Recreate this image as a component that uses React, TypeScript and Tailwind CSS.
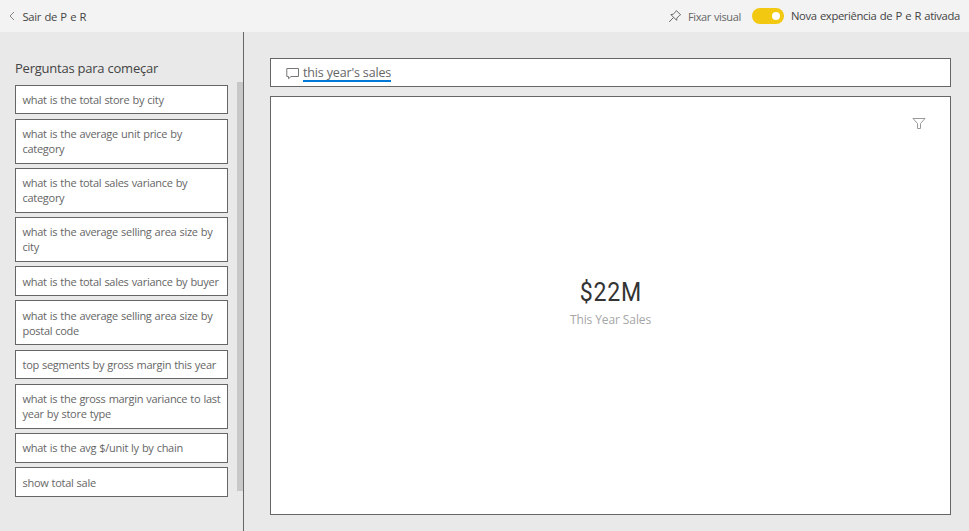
type Question = { lines: string[]; box: string };

const questions: Question[] = [
  { lines: ['what is the total store by city'], box: 'h-[29px] mb-[5px] pt-[6px]' },
  { lines: ['what is the average unit price by', 'category'], box: 'h-[45px] mb-[4px] pt-[6px]' },
  { lines: ['what is the total sales variance by', 'category'], box: 'h-[45px] mb-[4px] pt-[6px]' },
  { lines: ['what is the average selling area size by', 'city'], box: 'h-[45px] mb-[4px] pt-[6px]' },
  { lines: ['what is the total sales variance by buyer'], box: 'h-[30px] mb-[4px] pt-[7px]' },
  { lines: ['what is the average selling area size by', 'postal code'], box: 'h-[45px] mb-[5px] pt-[7px]' },
  { lines: ['top segments by gross margin this year'], box: 'h-[29px] mb-[5px] pt-[6px]' },
  { lines: ['what is the gross margin variance to last', 'year by store type'], box: 'h-[45px] mb-[4px] pt-[6px]' },
  { lines: ['what is the avg $/unit ly by chain'], box: 'h-[30px] mb-[4px] pt-[6px]' },
  { lines: ['show total sale'], box: 'h-[30px] pt-[7px]' },
];

function Header() {
  return (
    <header className="flex h-8 shrink-0 items-center bg-[#f3f3f3] text-[#444]">
      <svg className="ml-[9px] h-[10px] w-[6px]" viewBox="0 0 6 10" fill="none" stroke="#777">
        <path d="M5 1 1 5l4 4" strokeWidth="0.9" />
      </svg>
      <button className="ml-[7.5px] mt-px text-[11.25px] leading-4 tracking-[-0.33px] [word-spacing:0.8px]">Sair de P e R</button>
      <div className="ml-auto flex items-center">
        <svg className="h-[14px] w-[14px]" viewBox="0 0 14 14" fill="none" stroke="#666">
          <path d="M8.4 1.6 12.6 5.8 11.6 6.3 8.9 9 8.6 11.3 2.9 5.6 5.2 5.2 7.9 2.6ZM5.6 8.4 1.2 12.9" strokeWidth="1" />
        </svg>
        <span className="ml-[6px] mt-[2px] w-[54px] whitespace-nowrap text-[11px] leading-4 tracking-[-0.37px] text-[#666] [word-spacing:0.5px]">Fixar visual</span>
        <span className="ml-[10px] flex h-4 w-8 items-center justify-end rounded-full bg-[#f2c811] pr-1">
          <span className="h-2 w-2 rounded-full bg-white" />
        </span>
        <span className="ml-[7px] w-[178px] whitespace-nowrap text-[11.25px] leading-4 tracking-[-0.38px] [word-spacing:0.8px]">Nova experiência de P e R ativada</span>
      </div>
    </header>
  );
}

function Sidebar() {
  return (
    <aside className="flex w-[244px] shrink-0 border-r border-[#666]">
      <div className="ml-[15px] w-[213px] pt-[26px]">
        <h2 className="h-[27px] text-[13px] leading-5 tracking-[-0.23px] text-[#444]">Perguntas para começar</h2>
        {questions.map((q, i) => (
          <div key={i} className={`border border-[#666] bg-white pl-[6.5px] text-[11px] leading-[15px] tracking-[-0.28px] text-[#666] [word-spacing:0.5px] ${q.box}`}>
            {q.lines.map((line) => (
              <div key={line} className="whitespace-nowrap">{line}</div>
            ))}
          </div>
        ))}
      </div>
      <div className="ml-auto mt-[50px] h-[409px] w-[6px] bg-[#c8c8c8]" />
    </aside>
  );
}

export default function App() {
  return (
    <div className="flex h-[531px] w-[969px] flex-col overflow-hidden bg-[#e9e9e9] font-['Open_Sans','Noto_Sans',sans-serif]">
      <Header />
      <div className="flex min-h-0 flex-1">
        <Sidebar />
        <main className="flex flex-1 flex-col pl-[26px] pr-[18px] pt-[26px]">
          <div className="flex h-[29px] items-start border border-[#666] bg-white pl-[15px]">
            <svg className="mt-[8px] h-[13px] w-[14px]" viewBox="0 0 14 13" fill="none" stroke="#777">
              <path d="M.8 1.5h11.7v8H5L2.5 11.7V9.5H.8Z" />
            </svg>
            <span className="ml-[3px] mt-[5px] h-[18px] w-[88px] whitespace-nowrap border-b-2 border-[#0078d7] text-[12.5px] leading-[17px] tracking-[-0.16px] text-[#666]">this year's sales</span>
          </div>
          <section className="mt-[9px] flex h-[419px] flex-col border border-[#666] bg-white">
            <svg className="ml-auto mr-[24px] mt-[20px] h-[13px] w-[14px]" viewBox="0 0 14 13" fill="none" stroke="#999">
              <path d="M1 1.5h12L8.5 6.5v5h-3v-5Z" />
            </svg>
            <div className="mt-[146px] flex flex-col items-center text-center">
              <div className="h-8 origin-center scale-x-[0.89] pl-px font-[Roboto,sans-serif] text-[26px] leading-8 tracking-[0.8px] text-[#333]">$22M</div>
              <div className="mt-[4px] whitespace-nowrap text-[12px] leading-4 tracking-[-0.1px] text-[#a6a6a6]">This Year Sales</div>
            </div>
          </section>
        </main>
      </div>
    </div>
  );
}
